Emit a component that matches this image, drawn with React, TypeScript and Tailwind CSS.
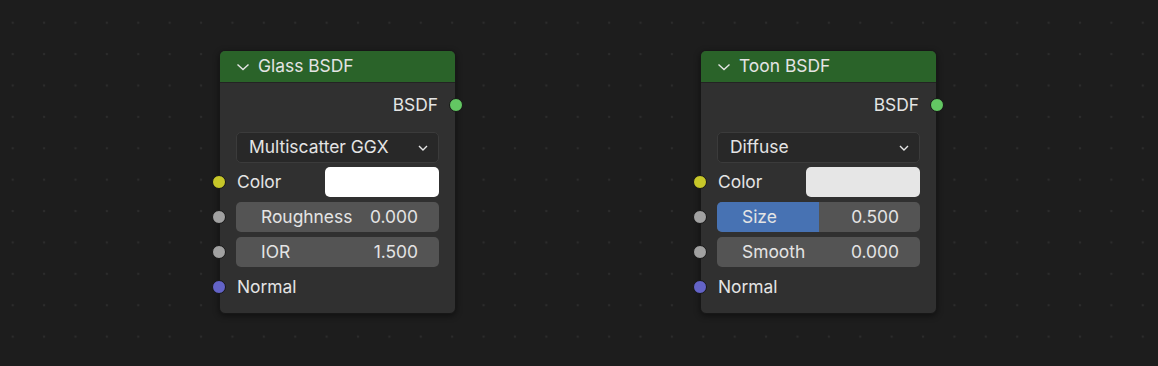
import React from "react";

type Slot =
  | { kind: "color"; label: string; swatch: string }
  | { kind: "number"; label: string; value: string; fill?: number }
  | { kind: "plain"; label: string };

interface NodeProps {
  title: string;
  mode: string;
  inputs: Slot[];
}

const socketColor: Record<string, string> = {
  color: "bg-[#c7c729]",
  number: "bg-[#a1a1a1]",
  plain: "bg-[#6363c7]",
};

function Socket({ color, side }: { color: string; side: "left" | "right" }) {
  return (
    <span
      className={`absolute top-1/2 -translate-y-1/2 w-[14px] h-[14px] rounded-full border border-[#161616] ${color} ${
        side === "left" ? "-left-[24px]" : "-right-[24px]"
      }`}
    />
  );
}

function Row({ slot }: { slot: Slot }) {
  return (
    <div className="relative h-[30px] flex items-center">
      <Socket color={socketColor[slot.kind]} side="left" />
      {slot.kind === "color" && (
        <>
          <span className="flex-1 pl-[1px]">{slot.label}</span>
          <div className={`w-[114px] h-[30px] rounded-[5px] ${slot.swatch}`} />
        </>
      )}
      {slot.kind === "number" && (
        <div className="relative flex-1 h-[30px] rounded-[5px] bg-[#545454] overflow-hidden">
          {slot.fill !== undefined && (
            <div
              className="absolute inset-y-0 left-0 bg-[#4772b3]"
              style={{ width: `${slot.fill * 100}%` }}
            />
          )}
          <div className="relative h-full flex items-center justify-between pl-[25px] pr-[21px]">
            <span>{slot.label}</span>
            <span>{slot.value}</span>
          </div>
        </div>
      )}
      {slot.kind === "plain" && <span className="pl-[1px]">{slot.label}</span>}
    </div>
  );
}

function ShaderNode({ title, mode, inputs }: NodeProps) {
  return (
    <div className="w-[237px] rounded-[6px] border border-[#171717] bg-[#303030] shadow-[0_2px_6px_rgba(0,0,0,0.45)] text-[17.4px] text-[#e4e4e4]">
      <div className="h-[32px] flex items-center gap-[8px] pl-[16px] rounded-t-[5px] bg-[#2a6329] border-b border-[#232323]">
        <svg width="14" height="8" viewBox="0 0 14 8" className="mt-[1px]">
          <polyline points="1.5,1.5 7,6.5 12.5,1.5" fill="none" stroke="#e6e6e6" strokeWidth="1.4" />
        </svg>
        <span>{title}</span>
      </div>
      <div className="px-[16px] pt-[10px] pb-[11px]">
        <div className="relative h-[24px] flex items-center justify-end pr-[1px]">
          <span>BSDF</span>
          <Socket color="bg-[#63c763]" side="right" />
        </div>
        <div className="mt-[15px] h-[31px] flex items-center justify-between pl-[12px] pr-[10px] rounded-[5px] bg-[#282828] border border-[#3b3b3b]">
          <span>{mode}</span>
          <svg width="10" height="6" viewBox="0 0 10 6">
            <polyline points="1,1 5,5 9,1" fill="none" stroke="#e6e6e6" strokeWidth="1.4" />
          </svg>
        </div>
        <div className="mt-[4px] flex flex-col gap-[5px]">
          {inputs.map((s) => (
            <Row key={s.label} slot={s} />
          ))}
        </div>
      </div>
    </div>
  );
}

export default function App() {
  return (
    <div
      className="w-[1158px] h-[366px] overflow-hidden bg-[#1d1d1d] bg-[radial-gradient(circle,#2c2c2c_1px,transparent_1.6px)] bg-[length:31.4px_31.4px] bg-[position:-3px_7px] flex items-start gap-[244px] pl-[219px] pt-[50px]"
      style={{ fontFamily: "Inter, 'Noto Sans', sans-serif" }}
    >
      <ShaderNode
        title="Glass BSDF"
        mode="Multiscatter GGX"
        inputs={[
          { kind: "color", label: "Color", swatch: "bg-white" },
          { kind: "number", label: "Roughness", value: "0.000" },
          { kind: "number", label: "IOR", value: "1.500" },
          { kind: "plain", label: "Normal" },
        ]}
      />
      <ShaderNode
        title="Toon BSDF"
        mode="Diffuse"
        inputs={[
          { kind: "color", label: "Color", swatch: "bg-[#e6e6e6]" },
          { kind: "number", label: "Size", value: "0.500", fill: 0.5 },
          { kind: "number", label: "Smooth", value: "0.000" },
          { kind: "plain", label: "Normal" },
        ]}
      />
    </div>
  );
}
